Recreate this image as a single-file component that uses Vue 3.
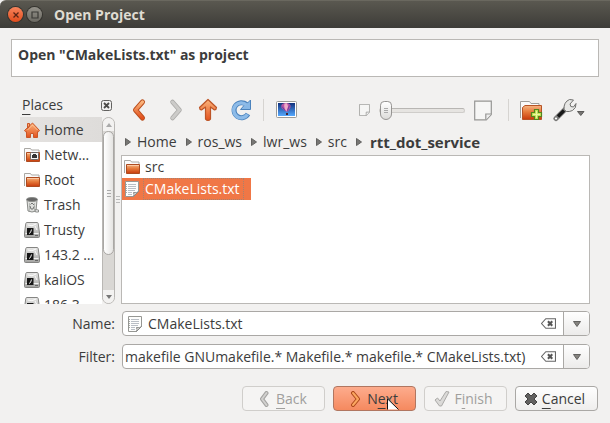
<script setup>
import { ref } from 'vue'

const places = [
  { label: 'Home', icon: 'home' },
  { label: 'Netw…', icon: 'network' },
  { label: 'Root', icon: 'folder' },
  { label: 'Trash', icon: 'trash' },
  { label: 'Trusty', icon: 'disk' },
  { label: '143.2 …', icon: 'disk' },
  { label: 'kaliOS', icon: 'disk' },
  { label: '186.3', icon: 'disk' }
]
const crumbs = ['Home', 'ros_ws', 'lwr_ws', 'src', 'rtt_dot_service']
const activePlace = ref('Home')
const selectedFile = ref('CMakeLists.txt')
const fileName = ref('CMakeLists.txt')
const filter = ref('makefile GNUmakefile.* Makefile.* makefile.* CMakeLists.txt)')
const zoom = ref(0)
</script>

<template>
  <div class="dialog">
    <svg class="defs" width="0" height="0" aria-hidden="true">
      <defs>
        <linearGradient id="orange" x1="0" y1="0" x2="0" y2="1">
          <stop offset="0" stop-color="#fbb57c" /><stop offset="1" stop-color="#e2501c" />
        </linearGradient>
        <linearGradient id="folderFill" x1="0" y1="0" x2="0" y2="1">
          <stop offset="0" stop-color="#f6b583" /><stop offset=".45" stop-color="#e67b3c" /><stop offset="1" stop-color="#c83a0c" />
        </linearGradient>
        <linearGradient id="grey" x1="0" y1="0" x2="0" y2="1">
          <stop offset="0" stop-color="#e9e9e8" /><stop offset="1" stop-color="#a3a3a1" />
        </linearGradient>
        <linearGradient id="sky" x1="0" y1="0" x2="0" y2="1">
          <stop offset="0" stop-color="#10307c" /><stop offset="1" stop-color="#55a9ff" />
        </linearGradient>
        <symbol id="i-home" viewBox="0 0 16 16">
          <path d="M3.5 1.5h2v3l-2 2zM8.5 1 .5 8.5l1 1.2h1v5.8h4v-4h3v4h4V9.7h1l1-1.2z" fill="url(#orange)" stroke="#cb5526" stroke-linejoin="round" />
          <path d="m3.500 8 5-5 5 5" fill="none" stroke="#ffd0a4" opacity=".7" />
        </symbol>
        <symbol id="i-folder" viewBox="0 0 16 16">
          <path d="M.5 14V1.500h6l1 1.500h7.500v11" fill="#fafafa" stroke="#aaa8a4" />
          <path d="M2.500 5.500h13v9h-13z" fill="url(#folderFill)" stroke="#ad4b20" />
          <path d="M3 6.500h12" stroke="#ffd7b8" opacity=".7" />
        </symbol>
        <symbol id="i-network" viewBox="0 0 16 16">
          <use href="#i-folder" />
          <rect x="6.500" y="5.500" width="8" height="7" rx="1" fill="#f3f3f3" stroke="#666" />
          <path d="M9 7h3v1h1v3H8V8h1z" fill="#333" />
        </symbol>
        <symbol id="i-trash" viewBox="0 0 16 16">
          <path d="m3 3 1 11q4 2 8 0l1-11z" fill="#dedfdd" stroke="#898b88" />
          <ellipse cx="8" cy="2.500" rx="5.500" ry="2" fill="#666" stroke="#8d8f8c" />
          <path d="M5.500 6v8M10.500 6v8" stroke="#b7bab7" />
          <path d="m6.500 7.500 1.500-1.500 2 2M6 9l1 3h2M10 9.500 9 12" fill="none" stroke="#737573" />
          <path d="m11 12.500 3.500.500v2h-3z" fill="#eee" stroke="#8d8f8c" />
        </symbol>
        <symbol id="i-disk" viewBox="0 0 16 16">
          <path d="M3 .5h10q1 0 1.200 1L15.500 11v3.500q0 1-1 1h-13q-1 0-1-1V11L1.800 1.500Q2 .5 3 .5z" fill="url(#grey)" stroke="#858583" />
          <path d="M1.500 11.500h13" stroke="#f3f3f2" />
          <path d="M4 3q4 2 8-1M11 4l2 4" fill="none" stroke="#fbfbfb" />
          <path d="M3 6h6.500v7H3z" fill="#161616" />
          <path d="m5 11.500 1.500-1 1-3" fill="none" stroke="#eee" />
          <path d="M11 13.500h3" stroke="#666" />
        </symbol>
        <symbol id="i-doc" viewBox="0 0 16 16">
          <path d="M1.500.5h13v10l-5 5h-8z" fill="#fdfdfc" stroke="#969793" />
          <path d="M4 3.500h8M4 5.500h8M4 7.500h8M4 9.500h7M4 11.500h4M4 13.500h4" stroke="#b9bec5" />
          <path d="M2.500 3v10" stroke="#a8aaa8" stroke-dasharray="1 1" />
          <path d="M9.500 15.500q1-2 0-4 3 1 5-1z" fill="#e4e4e2" stroke="#888987" />
        </symbol>
        <symbol id="i-note" viewBox="0 0 18 20">
          <path d="M.7.700h16.600v13.300l-5 5.300H.7z" fill="#f6f6f5" stroke="#969694" stroke-width="1.200" />
          <path d="M11.800 19.300v-5.800h5.500" fill="#eee" stroke="#969694" stroke-width="1.200" />
        </symbol>
        <symbol id="i-clear" viewBox="0 0 14 10">
          <path d="M13.500.5h-9L.5 5l4 4.500h9z" fill="#fff" stroke="#666" />
          <path d="m6.500 3 4 4M10.500 3l-4 4" stroke="#555" stroke-width="2" />
        </symbol>
      </defs>
    </svg>

    <header class="titlebar">
      <button class="wm close" aria-label="Close"><svg width="8" height="8" viewBox="0 0 8 8"><path d="m1.500 1.500 5 5M6.500 1.500l-5 5" stroke="#5a2415" stroke-width="1.300" /></svg></button>
      <button class="wm" aria-label="Maximize"><svg width="8" height="8" viewBox="0 0 8 8"><path d="M1 1h6v6H1z" fill="none" stroke="#3b3a36" stroke-width="1.200" /></svg></button>
      <span class="title">Open Project</span>
    </header>

    <div class="banner">Open "CMakeLists.txt" as project</div>

    <main class="browser">
      <aside class="places">
        <div class="places-head">
          <span><u>P</u>laces</span>
          <button class="plain" aria-label="Close places">
            <svg width="11" height="11" viewBox="0 0 11 11"><rect x=".5" y=".5" width="10" height="10" rx="2" fill="none" stroke="#62615f" /><path d="m3 3 5 5M8 3 3 8" stroke="#4c4b49" stroke-width="1.800" /></svg>
          </button>
        </div>
        <div class="places-body">
          <ul class="place-list">
            <li v-for="p in places" :key="p.label">
              <button class="place" :class="{ active: p.label === activePlace }" @click="activePlace = p.label">
                <svg width="16" height="16" aria-hidden="true"><use :href="'#i-' + p.icon" /></svg>{{ p.label }}
              </button>
            </li>
          </ul>
          <div class="scroll" aria-hidden="true">
            <span class="arrow up"></span>
            <span class="thumb"><i></i><i></i><i></i></span>
            <span class="rest"></span>
            <span class="arrow"></span>
          </div>
        </div>
      </aside>

      <div class="splitter" aria-hidden="true"><i></i><i></i><i></i></div>

      <section class="files">
        <div class="toolbar">
          <button class="tool" aria-label="Back"><svg width="24" height="24" viewBox="0 0 24 24"><path d="m15.500 4-7 8 7 8" fill="none" stroke="#b94d1c" stroke-width="5" stroke-linecap="round" stroke-linejoin="round" /><path d="m15.500 4-7 8 7 8" fill="none" stroke="url(#orange)" stroke-width="3.200" stroke-linecap="round" stroke-linejoin="round" /></svg></button>
          <button class="tool" aria-label="Forward" disabled><svg width="24" height="24" viewBox="0 0 24 24"><path d="m11.500 4 7 8-7 8" fill="none" stroke="#aaa9a7" stroke-width="4.500" stroke-linecap="round" stroke-linejoin="round" /><path d="m11.500 4 7 8-7 8" fill="none" stroke="#cccbc9" stroke-width="3" stroke-linecap="round" stroke-linejoin="round" /></svg></button>
          <button class="tool" aria-label="Up"><svg width="24" height="24" viewBox="0 0 24 24"><path d="m13 1.500 8.500 8q0 2-2 2.500L15.500 9v12q-2.500 3-5 0V9l-4 3q-2-.5-2-2.500z" fill="url(#orange)" stroke="#bd5527" stroke-width="1.200" stroke-linejoin="round" /></svg></button>
          <button class="tool" aria-label="Reload"><svg width="24" height="24" viewBox="0 0 24 24"><path d="M19 16A7.500 7.500 0 1 1 17.500 6.500" fill="none" stroke="#4b83bd" stroke-width="5" /><path d="M21.500 2v9.500h-10l3.500-4 3-2z" fill="#87b7e6" stroke="#4b83bd" /><path d="M18.500 16.500A7.500 7.500 0 1 1 17.500 7" fill="none" stroke="#8dbbe8" stroke-width="3.400" /></svg></button>
          <span class="sep"></span>
          <button class="tool" aria-label="Preview"><svg width="24" height="24" viewBox="0 0 24 24"><rect x="2.500" y="3.500" width="20" height="16" rx="1" fill="#fff" stroke="#9a9a98" /><path d="M4 5h17v13H4z" fill="url(#sky)" /><path d="M12 13.500 7.500 10Q6 5.500 11.500 5q6 0 5 4.500L14 13.500z" fill="#b655a4" /><path d="M10.500 5.500q-1 4 2 8l1.500-5-1-3.300z" fill="#f0a9c8" /><path d="m8 8.500 3 4M15.500 7.500l-2 5" stroke="#6d3da4" /><path d="M12 15h2v2h-2z" fill="#4b2330" /></svg></button>
          <label class="zoom">
            <svg width="11" height="12" aria-hidden="true"><use href="#i-note" /></svg>
            <input v-model="zoom" type="range" min="0" max="100" aria-label="Icon size" />
            <svg width="18" height="21" aria-hidden="true"><use href="#i-note" /></svg>
          </label>
          <span class="sep"></span>
          <button class="tool" aria-label="New folder"><svg width="24" height="24" viewBox="0 0 24 24"><path d="M1.500 20V3.500h9l1.500 2h8v3" fill="#fafafa" stroke="#a09f9c" /><path d="M3.500 9.500 6 7.500h16.500v14h-19z" fill="url(#folderFill)" stroke="#b65326" /><path d="M15.500 11.500h4v3h3v4h-3v3h-4v-3h-3v-4h3z" fill="#c8e65a" stroke="#54851d" stroke-width="1.200" /><path d="M17.500 13v7M14 16.500h7" stroke="#e9f6a2" /></svg></button>
          <button class="tool wide" aria-label="Options"><svg width="32" height="24" viewBox="0 0 32 24"><path d="m3 20.500 9-9" stroke="#7b7b79" stroke-width="5" stroke-linecap="round" /><path d="m5 18.500 6-6" stroke="#181818" stroke-width="3.200" /><circle cx="3" cy="20.500" r="1.100" fill="#fff" /><path d="M11 11.500Q10.500 4 16.500 1.500l4 .5-3.500 4 .8 2.500 2.700.5 2.500-3.500Q23.500 10 19.500 12.500 16 14 13.500 13.500z" fill="#e7e7e5" stroke="#70706e" /><path d="M24.500 13.500h6.500l-3.200 4z" fill="#777573" stroke="#5c5b59" /></svg></button>
        </div>

        <nav class="crumbs" aria-label="Location">
          <a v-for="(c, i) in crumbs" :key="c" href="#" :class="{ current: i === crumbs.length - 1 }"><svg width="6" height="8" viewBox="0 0 6 8" aria-hidden="true"><path d="M.5.500 5.500 4l-5 3.500z" fill="#777674" stroke="#62615f" /></svg>{{ c }}</a>
        </nav>

        <div class="listing">
          <button class="file" :class="{ selected: selectedFile === 'src' }" @click="selectedFile = 'src'">
            <svg width="16" height="16" aria-hidden="true"><use href="#i-folder" /></svg><span>src</span>
          </button>
          <button class="file" :class="{ selected: selectedFile === 'CMakeLists.txt' }" @click="selectedFile = 'CMakeLists.txt'">
            <svg width="16" height="16" aria-hidden="true"><use href="#i-doc" /></svg><span>CMakeLists.txt</span>
          </button>
        </div>
      </section>
    </main>

    <form class="fields" @submit.prevent>
      <label for="name">Name:</label>
      <div class="combo">
        <svg class="lead" width="16" height="16" aria-hidden="true"><use href="#i-doc" /></svg>
        <input id="name" v-model="fileName" type="text" />
        <button type="button" class="plain clear" aria-label="Clear name" @click="fileName = ''"><svg width="15" height="11"><use href="#i-clear" /></svg></button>
        <button type="button" class="drop" aria-label="Recent names"><svg width="8" height="6" viewBox="0 0 8 6"><path d="M.5.500h7L4 5.500z" fill="#85837f" stroke="#62615f" /></svg></button>
      </div>
      <label for="filter">Filter:</label>
      <div class="combo">
        <input id="filter" v-model="filter" class="filter" type="text" />
        <button type="button" class="plain clear" aria-label="Clear filter" @click="filter = ''"><svg width="15" height="11"><use href="#i-clear" /></svg></button>
        <button type="button" class="drop" aria-label="Filters"><svg width="8" height="6" viewBox="0 0 8 6"><path d="M.5.500h7L4 5.500z" fill="#85837f" stroke="#62615f" /></svg></button>
      </div>
    </form>

    <footer class="actions">
      <button class="action" disabled>
        <svg width="16" height="16" viewBox="0 0 16 16"><path d="M10.500 2 6 8l4.500 6" fill="none" stroke="#a4a3a1" stroke-width="4" stroke-linecap="round" stroke-linejoin="round" /><path d="M10.500 2 6 8l4.500 6" fill="none" stroke="#d2d1cf" stroke-width="2" stroke-linecap="round" stroke-linejoin="round" /></svg>
        <span><u>B</u>ack</span>
      </button>
      <button class="action primary">
        <svg width="16" height="16" viewBox="0 0 16 16"><path d="m6 2 5 6-5 6" fill="none" stroke="#ad481a" stroke-width="4" stroke-linecap="round" stroke-linejoin="round" /><path d="m6 2 5 6-5 6" fill="none" stroke="#fba660" stroke-width="2" stroke-linecap="round" stroke-linejoin="round" /></svg>
        <span>N<u>e</u>xt</span>
        <svg class="pointer" width="13" height="12" viewBox="0 0 13 12" aria-hidden="true"><path d="M.5 0v11.500h11z" fill="#fff" /><path d="M.5 11.500V.800l11 10.700" fill="none" stroke="#111" /></svg>
      </button>
      <button class="action" disabled>
        <svg width="16" height="16" viewBox="0 0 16 16"><path d="m1 9 2.500-2L6 10l6-9.500 3 .5-7.500 14H5.500z" fill="#dbdad8" stroke="#aaa9a7" stroke-linejoin="round" /></svg>
        <span>F<u>i</u>nish</span>
      </button>
      <button class="action">
        <svg width="14" height="14" viewBox="0 0 14 14"><path d="m4 1 3 3 3-3 3 3-3 3 3 3-3 3-3-3-3 3-3-3 3-3-3-3z" fill="#626160" stroke="#454443" stroke-linejoin="round" /></svg>
        <span><u>C</u>ancel</span>
      </button>
    </footer>
  </div>
</template>

<style>
body {
  background: #f2f1f0;
}
</style>

<style scoped>
* {
  box-sizing: border-box;
}
.dialog {
  display: flex;
  flex-direction: column;
  height: 100vh;
  background: #f2f1f0;
  color: #3c3c3c;
  font: 14px/20px "Open Sans", "Noto Sans", sans-serif;
}
button,
input {
  font: inherit;
  color: inherit;
  margin: 0;
}
button {
  padding: 0;
  border: 0;
  background: none;
}
svg {
  flex: none;
  display: block;
}
.defs {
  position: absolute;
}
u {
  text-decoration-thickness: 1px;
  text-underline-offset: 4px;
}
.titlebar {
  display: flex;
  align-items: center;
  flex: none;
  height: 28px;
  padding-left: 8px;
  gap: 4px;
  background: linear-gradient(#5a5850, #3d3c38);
  border-top: 1px solid #6a685f;
  border-radius: 6px 0 0 0;
}
.wm {
  display: grid;
  place-items: center;
  width: 15px;
  height: 15px;
  border-radius: 50%;
  background: linear-gradient(#94928a, #6b6962);
  box-shadow: 0 0 0 1px #35342f;
}
.wm.close {
  background: linear-gradient(#f7845c, #e24d1d);
}
.title {
  margin-left: 8px;
  color: #dfdbd2;
  font-weight: 700;
}
.banner {
  flex: none;
  margin: 11px 11px 0;
  padding: 5px 6px 11px;
  border: 1px solid #bab8b5;
  background: #fff;
  font-weight: 700;
}
.browser {
  display: flex;
  flex: 1;
  min-height: 0;
  padding: 18px 20px 0;
}
.places {
  display: flex;
  flex-direction: column;
  width: 95px;
}
.places-head {
  display: flex;
  align-items: center;
  justify-content: space-between;
  padding: 0 3px 2px 2px;
}
.places-body {
  display: flex;
  flex: 1;
  min-height: 0;
}
.place-list {
  flex: 1;
  margin: 0;
  padding: 0;
  list-style: none;
  overflow: hidden;
  background: #fff;
}
.place {
  display: flex;
  align-items: center;
  gap: 4px;
  width: 100%;
  height: 25px;
  padding-left: 4px;
  white-space: nowrap;
}
.place.active {
  background: linear-gradient(90deg, #e4e2e0, #dedcda);
}
.scroll {
  display: flex;
  flex-direction: column;
  width: 13px;
  border: 1px solid #b9b7b4;
  border-radius: 7px;
  background: #d9d7d4;
  overflow: hidden;
}
.arrow {
  display: grid;
  place-items: center;
  height: 13px;
  background: #f3f2f1;
}
.arrow::before {
  content: "";
  border: 3px solid transparent;
  border-top: 4px solid #777;
  border-bottom: 0;
}
.arrow.up::before {
  transform: rotate(180deg);
  border-top-color: #aaa;
}
.thumb {
  display: flex;
  flex-direction: column;
  align-items: center;
  justify-content: center;
  gap: 2px;
  flex: 7;
  border: 1px solid #a9a7a4;
  border-radius: 6px;
  background: linear-gradient(90deg, #fff, #e5e4e2);
}
.thumb i {
  width: 4px;
  height: 1px;
  background: #aaa;
}
.rest {
  flex: 2;
}
.splitter {
  display: flex;
  flex-direction: column;
  align-items: center;
  justify-content: center;
  gap: 2px;
  width: 6px;
}
.splitter i {
  width: 4px;
  height: 1px;
  background: #bbb;
}
.files {
  display: flex;
  flex-direction: column;
  flex: 1;
  min-width: 0;
}
.toolbar {
  display: flex;
  align-items: center;
  gap: 10px;
  height: 30px;
  padding: 0 5px 0 6px;
}
.tool {
  width: 24px;
  height: 24px;
}
.tool.wide {
  width: 32px;
}
.sep {
  width: 1px;
  height: 22px;
  background: #d6d4d1;
}
.zoom {
  display: flex;
  align-items: center;
  gap: 9px;
  margin-left: auto;
  margin-right: 6px;
}
.zoom input {
  appearance: none;
  width: 86px;
  height: 22px;
  margin: 0;
  background: none;
}
.zoom input::-webkit-slider-runnable-track {
  height: 5px;
  border: 1px solid #cfcdca;
  border-top-color: #b8b6b3;
  border-radius: 3px;
  background: #e6e4e1;
}
.zoom input::-webkit-slider-thumb {
  appearance: none;
  width: 12px;
  height: 19px;
  margin-top: -8px;
  border: 1px solid #969492;
  border-radius: 5px 5px 7px 7px;
  background:
    linear-gradient(#aaa, #aaa) center 6px / 4px 1px no-repeat,
    linear-gradient(#aaa, #aaa) center 8px / 4px 1px no-repeat,
    linear-gradient(#aaa, #aaa) center 10px / 4px 1px no-repeat,
    linear-gradient(#fff, #dddcda);
}
.crumbs {
  display: flex;
  align-items: center;
  gap: 9px;
  height: 30px;
  padding: 4px 4px 0;
}
.crumbs a {
  display: flex;
  align-items: center;
  gap: 6px;
  color: inherit;
  text-decoration: none;
}
.crumbs .current {
  gap: 8px;
  font-size: 15px;
  font-weight: 700;
}
.listing {
  flex: 1;
  min-height: 0;
  border: 1px solid #bab8b5;
  background: #fff;
  overflow: hidden;
}
.file {
  display: flex;
  align-items: center;
  gap: 4px;
  height: 22px;
  padding: 0 8px 0 2px;
}
.file span {
  padding: 0 3px 0 1px;
}
.file.selected {
  background: #f07746;
  color: #fff;
}
.file.selected span {
  outline: 1px dotted #a48272;
}
.fields {
  display: grid;
  grid-template-columns: 95px 1fr;
  align-items: center;
  gap: 8px 7px;
  flex: none;
  padding: 7px 20px 0;
}
.fields > label {
  text-align: right;
}
.combo {
  display: flex;
  align-items: center;
  height: 25px;
  border: 1px solid #aaa8a5;
  border-radius: 4px;
  background: #fff;
  overflow: hidden;
}
.lead {
  margin-left: 4px;
}
.combo input {
  flex: 1;
  min-width: 0;
  height: 23px;
  padding: 0 0 0 5px;
  border: 0;
  outline: 0;
  background: none;
}
.combo .filter {
  padding-left: 2px;
}
.clear {
  margin: 0 7px 0 4px;
}
.drop {
  display: grid;
  place-items: center;
  width: 26px;
  height: 23px;
  border-left: 1px solid #aaa8a5;
  background: linear-gradient(#fefefe, #ecebea);
}
.actions {
  display: flex;
  justify-content: flex-end;
  gap: 8px;
  flex: none;
  padding: 17px 12px 12px;
}
.action {
  position: relative;
  display: flex;
  align-items: center;
  justify-content: center;
  gap: 4px;
  width: 83px;
  height: 25px;
  padding-right: 4px;
  border: 1px solid #aaa8a5;
  border-radius: 4px;
  background: linear-gradient(#fefefe, #efeeed);
}
.action:disabled {
  border-color: #d0cecb;
  background: #f5f4f3;
  color: #a09f9d;
}
.action.primary {
  border-color: #b17660;
  background: linear-gradient(#fdac8d, #f5895f);
}
.pointer {
  position: absolute;
  left: 53px;
  top: 11px;
}
</style>
